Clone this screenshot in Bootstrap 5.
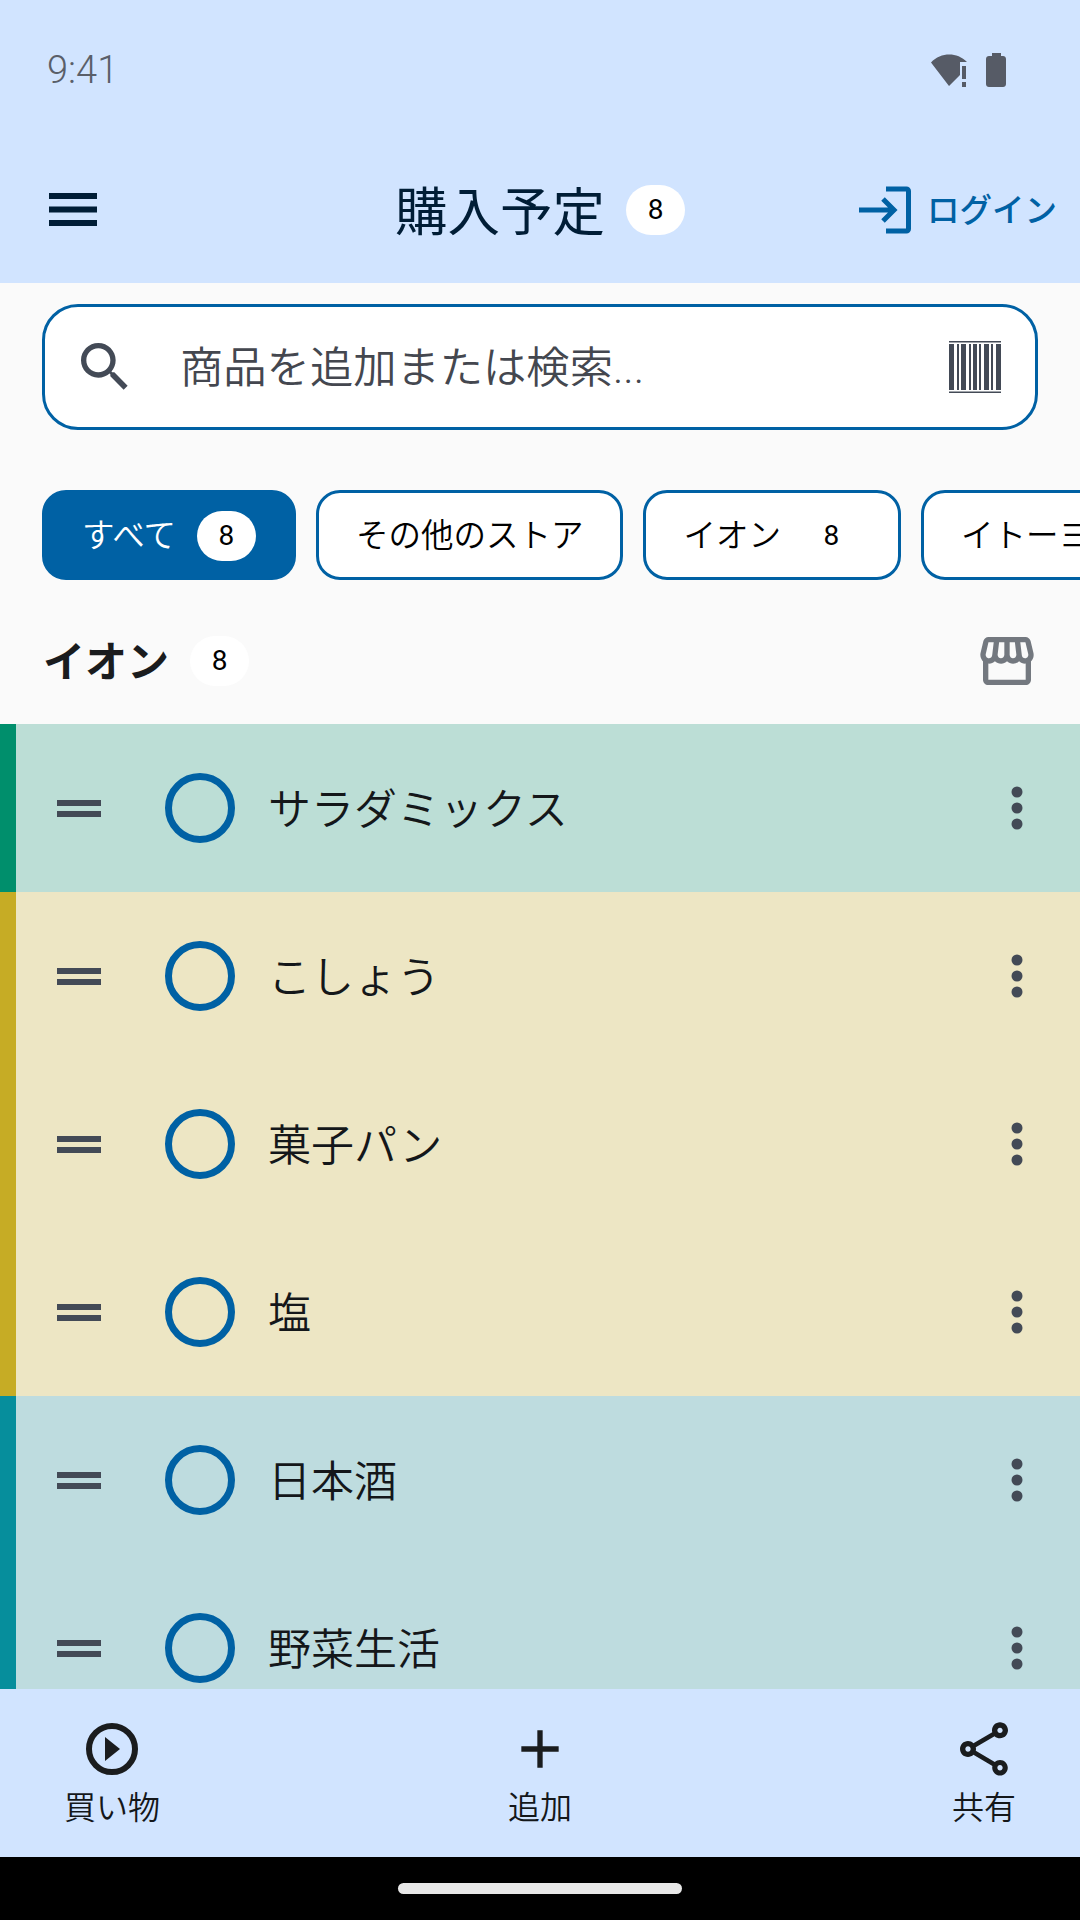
<!DOCTYPE html>
<html lang="ja">
<head>
    <meta charset="UTF-8">
    <meta name="viewport" content="width=device-width, initial-scale=1.0">
    <title>購入予定</title>
    <link href="https://cdn.jsdelivr.net/npm/bootstrap@5.3.0/dist/css/bootstrap.min.css" rel="stylesheet">
    <style>
        body {
            margin: 0;
            background: #fafafa;
            font-family: Roboto, "Noto Sans CJK JP", sans-serif;
            color: #1a1c1e;
        }
        .screen { width: 1080px; height: 1920px; overflow: hidden; }
        .top-area { background: #d1e4ff; height: 283px; flex-shrink: 0; }
        .status-bar { height: 136px; padding: 4px 74px 0 47px; }
        .status-time { font-size: 38px; color: #5a5f69; line-height: 1; font-weight: 300; }
        .status-icons { gap: 18px; }
        .app-bar { height: 147px; padding: 0 23px; display: grid; grid-template-columns: 1fr auto 1fr; align-items: center; }
        .menu-mark { margin-left: 26px; }
        .title-group { gap: 21px; }
        .app-title { font-size: 52.5px; line-height: 1; color: #001d36; padding-top: 7px; }
        .count-pill { background: #fff; color: #000; width: 59px; height: 50px; border-radius: 25px; font-size: 28px; font-weight: 400; line-height: 1; flex-shrink: 0; }
        .login-text { font-size: 32.5px; font-weight: 500; color: #0061a4; line-height: 1; padding-top: 4px; }
        .search-wrap { padding: 21px 42px 0; flex-shrink: 0; }
        .search-box { height: 126px; background: #fff; border: 3px solid #0061a4; border-radius: 36px; padding: 0 34px 0 28px; }
        .search-text { font-size: 43.3px; color: #44474f; line-height: 1; margin-left: 43px; padding-top: 4px; font-weight: 350; }
        .chip-strip { padding: 60px 0 0 42px; gap: 20px; overflow: hidden; flex-shrink: 0; }
        .store-chip { height: 90px; border: 3px solid #0061a4; border-radius: 24px; background: #fff; color: #000; font-size: 32.5px; font-weight: 350; padding: 2px 37px 0; gap: 21px; white-space: nowrap; flex-shrink: 0; }
        .store-chip.is-on { background: #0061a4; color: #fff; }
        .section-head { height: 144px; padding: 18px 41px 0 43px; flex-shrink: 0; }
        .section-name { font-size: 42px; font-weight: 700; line-height: 1; padding-top: 3px; }
        .section-pill { margin-left: 21px; }
        .item-list { min-height: 0; overflow: hidden; }
        .item-row { height: 168px; border-left: 16px solid; padding: 0 56px 0 41px; }
        .tone-green { background: #bcded6; border-color: #008f6c; }
        .tone-yellow { background: #ede6c4; border-color: #c6ac25; }
        .tone-teal { background: #bedcdf; border-color: #068e9c; }
        .drag-mark { width: 44px; height: 17px; border-top: 6px solid #434a56; border-bottom: 6px solid #434a56; flex-shrink: 0; }
        .check-ring { width: 70px; height: 70px; border: 7px solid #0061a4; border-radius: 50%; margin-left: 64px; flex-shrink: 0; }
        .item-name { font-size: 43px; line-height: 1; margin-left: 33px; padding-top: 4px; font-weight: 350; color: #14171a; }
        .bottom-bar { height: 168px; background: #d1e4ff; padding: 28px 64px 0; flex-shrink: 0; }
        .bottom-item { width: max-content; }
        .bottom-label { font-size: 32px; line-height: 40px; margin-top: 7px; font-weight: 350; color: #14171a; }
        .gesture-bar { height: 63px; background: #000; padding-top: 26px; flex-shrink: 0; }
        .gesture-pill { width: 284px; height: 11px; border-radius: 6px; background: #e8e8e8; }
    </style>
</head>
<body>
<div class="screen d-flex flex-column">
    <div class="top-area">
        <div class="status-bar d-flex align-items-center justify-content-between">
            <span class="status-time">9:41</span>
            <div class="status-icons d-flex align-items-center">
                <svg width="38" height="34" viewBox="0 0 38 34" fill="#565b66"><path d="M1 9.5C11 -1 27 -1 37 9H30V22L19 33Z"/><rect x="32" y="13" width="4" height="13"/><rect x="32" y="29" width="4" height="5"/></svg>
                <svg width="20" height="34" viewBox="0 0 20 34" fill="#565b66"><path d="M6 0H15V3H17C18.7 3 20 4.3 20 6V31C20 32.7 18.7 34 17 34H3C1.3 34 0 32.7 0 31V6C0 4.3 1.3 3 3 3H6Z"/></svg>
            </div>
        </div>
        <div class="app-bar">
            <svg class="menu-mark" width="48" height="33" viewBox="0 0 48 33" fill="#001d36"><rect width="48" height="6"/><rect y="13.5" width="48" height="6"/><rect y="27" width="48" height="6"/></svg>
            <div class="title-group d-flex align-items-center">
                <span class="app-title">購入予定</span>
                <span class="count-pill d-flex align-items-center justify-content-center">8</span>
            </div>
            <div class="d-flex align-items-center justify-content-end gap-3">
                <svg width="52" height="48" viewBox="0 0 52 48" fill="none" stroke="#0061a4" stroke-width="5"><path d="M27 3H47.5C48.5 3 49.5 4 49.5 5V43C49.5 44 48.5 45 47.5 45H27"/><path d="M0 24H34M24 13L35 24L24 35"/></svg>
                <span class="login-text">ログイン</span>
            </div>
        </div>
    </div>

    <div class="search-wrap">
        <div class="search-box d-flex align-items-center">
            <svg width="64" height="64" viewBox="0 0 24 24" fill="#434a56" class="flex-shrink-0"><path d="M15.5 14h-.79l-.28-.27C15.41 12.59 16 11.11 16 9.5 16 5.91 13.09 3 9.5 3S3 5.91 3 9.5 5.91 16 9.5 16c1.61 0 3.09-.59 4.23-1.57l.27.28v.79l5 4.99L20.49 19l-4.99-5zm-6 0C7.01 14 5 11.99 5 9.5S7.01 5 9.5 5 14 7.01 14 9.5 11.99 14 9.5 14z"/></svg>
            <span class="search-text flex-grow-1">商品を追加または検索...</span>
            <svg width="52" height="52" viewBox="0 0 52 52" fill="#434a56"><rect y="0" width="52" height="1.5"/><rect y="50.5" width="52" height="1.5"/><rect y="3" width="5" height="46"/><rect x="8" y="3" width="2" height="46"/><rect x="12" y="3" width="5" height="46"/><rect x="20" y="3" width="2" height="46"/><rect x="24" y="3" width="4" height="46"/><rect x="30" y="3" width="2" height="46"/><rect x="35" y="3" width="5" height="46"/><rect x="42" y="3" width="2" height="46"/><rect x="47" y="3" width="5" height="46"/></svg>
        </div>
    </div>

    <div class="chip-strip d-flex">
        <div class="store-chip is-on d-flex align-items-center"><span>すべて</span><span class="count-pill d-flex align-items-center justify-content-center">8</span></div>
        <div class="store-chip d-flex align-items-center"><span>その他のストア</span></div>
        <div class="store-chip d-flex align-items-center"><span>イオン</span><span class="count-pill d-flex align-items-center justify-content-center">8</span></div>
        <div class="store-chip d-flex align-items-center"><span>イトーヨーカドー</span></div>
    </div>

    <div class="section-head d-flex align-items-center">
        <span class="section-name">イオン</span>
        <span class="count-pill section-pill d-flex align-items-center justify-content-center">8</span>
        <svg class="ms-auto" width="64" height="64" viewBox="0 0 24 24" fill="#73787f"><path d="M21.9 8.89l-1.05-4.37c-.22-.9-1-1.52-1.91-1.52H5.05c-.9 0-1.69.63-1.9 1.52L2.1 8.89c-.24 1.02-.02 2.06.62 2.88.08.11.19.19.28.29V19c0 1.1.9 2 2 2h14c1.1 0 2-.9 2-2v-6.94c.09-.09.2-.18.28-.28.64-.82.87-1.87.62-2.89zm-2.99-3.9l1.05 4.37c.1.42.01.84-.25 1.17-.14.18-.44.47-.94.47-.61 0-1.14-.49-1.21-1.14L16.98 5l1.93-.01zM13 5h1.96l.54 4.52c.05.39-.07.78-.33 1.07-.22.26-.54.41-.95.41-.67 0-1.22-.59-1.22-1.31V5zM8.49 9.52L9.04 5H11v4.69c0 .72-.55 1.31-1.29 1.31-.34 0-.65-.15-.89-.41-.25-.29-.37-.68-.33-1.07zm-4.45-.16L5.05 5h1.97l-.58 4.86c-.08.65-.6 1.14-1.21 1.14-.49 0-.8-.29-.93-.47-.27-.32-.36-.75-.26-1.17zM5 19v-6.03c.08.01.15.03.23.03.87 0 1.66-.36 2.24-.95.6.6 1.4.95 2.31.95.87 0 1.65-.36 2.23-.93.59.57 1.39.93 2.29.93.84 0 1.64-.35 2.24-.95.58.59 1.37.95 2.24.95.08 0 .15-.02.23-.03V19H5z"/></svg>
    </div>

    <div class="item-list flex-grow-1" id="itemList"></div>

    <div class="bottom-bar row g-0">
        <div class="col-4 d-flex justify-content-start">
            <div class="bottom-item d-flex flex-column align-items-center">
                <svg width="64" height="64" viewBox="0 0 64 64" fill="none" stroke="#1a1c1e" stroke-width="6"><circle cx="32" cy="32" r="23"/><path d="M25 20L40 32L25 44Z" fill="#1a1c1e" stroke="none"/></svg>
                <span class="bottom-label">買い物</span>
            </div>
        </div>
        <div class="col-4 d-flex justify-content-center">
            <div class="bottom-item d-flex flex-column align-items-center">
                <svg width="64" height="64" viewBox="0 0 24 24" fill="#1a1c1e"><path d="M19 13h-6v6h-2v-6H5v-2h6V5h2v6h6v2z"/></svg>
                <span class="bottom-label">追加</span>
            </div>
        </div>
        <div class="col-4 d-flex justify-content-end">
            <div class="bottom-item d-flex flex-column align-items-center">
                <svg width="64" height="64" viewBox="0 0 24 24" fill="#1a1c1e"><path d="M18 16.08c-.76 0-1.44.3-1.96.77L8.91 12.7c.05-.23.09-.46.09-.7s-.04-.47-.09-.7l7.05-4.11c.54.5 1.25.81 2.04.81 1.66 0 3-1.34 3-3s-1.34-3-3-3-3 1.34-3 3c0 .24.04.47.09.7L8.04 9.81C7.5 9.31 6.79 9 6 9c-1.66 0-3 1.34-3 3s1.34 3 3 3c.79 0 1.5-.31 2.04-.81l7.12 4.16c-.05.21-.08.43-.08.65 0 1.61 1.31 2.92 2.92 2.92s2.92-1.31 2.92-2.92-1.31-2.92-2.92-2.92zM18 4c.55 0 1 .45 1 1s-.45 1-1 1-1-.45-1-1 .45-1 1-1zM6 13c-.55 0-1-.45-1-1s.45-1 1-1 1 .45 1 1-.45 1-1 1zm12 7.02c-.55 0-1-.45-1-1s.45-1 1-1 1 .45 1 1-.45 1-1 1z"/></svg>
                <span class="bottom-label">共有</span>
            </div>
        </div>
    </div>
    <div class="gesture-bar d-flex justify-content-center"><div class="gesture-pill"></div></div>
</div>

<script>
    // 商品リスト
    const items = [
        ["サラダミックス", "green"],
        ["こしょう", "yellow"],
        ["菓子パン", "yellow"],
        ["塩", "yellow"],
        ["日本酒", "teal"],
        ["野菜生活", "teal"]
    ];
    const dots = `<svg class="ms-auto" width="14" height="44" viewBox="0 0 14 44" fill="#434a56"><circle cx="7" cy="6" r="5.5"/><circle cx="7" cy="22" r="5.5"/><circle cx="7" cy="38" r="5.5"/></svg>`;
    document.getElementById("itemList").innerHTML = items.map(([name, tone]) => `
        <div class="item-row tone-${tone} d-flex align-items-center">
            <div class="drag-mark"></div>
            <div class="check-ring"></div>
            <span class="item-name">${name}</span>
            ${dots}
        </div>`).join("");
</script>
<script src="https://cdn.jsdelivr.net/npm/bootstrap@5.3.0/dist/js/bootstrap.bundle.min.js"></script>
</body>
</html>
